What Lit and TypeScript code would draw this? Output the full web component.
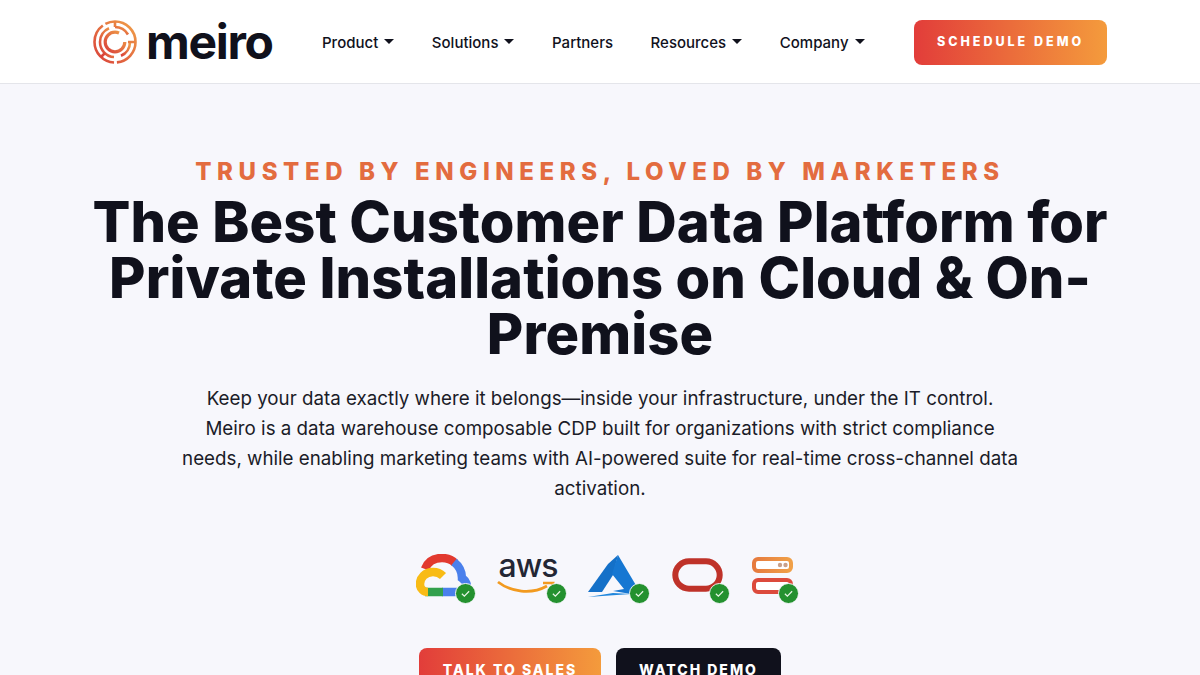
import { LitElement, html, css, svg } from 'lit';
import { customElement } from 'lit/decorators.js';

const NAV = [
  { label: 'Product', caret: true },
  { label: 'Solutions', caret: true },
  { label: 'Partners', caret: false },
  { label: 'Resources', caret: true },
  { label: 'Company', caret: true },
];

const check = html`
  <svg class="check" viewBox="0 0 22 22">
    <circle cx="11" cy="11" r="10.5" fill="#24912f" stroke="#f7f7fc" stroke-width="1" />
    <path d="M7.2 11.2l2.6 2.5 5-5" fill="none" stroke="#e8f5e6" stroke-width="1.3" />
  </svg>
`;

const logo = svg`
  <svg class="logo-mark" width="44" height="44" viewBox="0 0 44 44">
    <defs>
      <linearGradient id="lg" x1="0" y1="1" x2="1" y2="0">
        <stop offset="0" stop-color="#d9403a" />
        <stop offset="1" stop-color="#f0a048" />
      </linearGradient>
    </defs>
    <g fill="none" stroke="url(#lg)" stroke-width="2.6">
      <circle cx="22" cy="22" r="20.5" stroke-dasharray="30 3 50 3 42 3" />
      <path d="M22 7a15 15 0 0 1 13 7.500" />
      <path d="M37 22a15 15 0 0 1-9 13.800" />
      <path d="M21 37a15 15 0 0 1-14-15 15 15 0 0 1 9-13.800" />
      <circle cx="22" cy="22" r="9.800" stroke-width="3.200" stroke-dasharray="50 12" />
      <path d="M22 1.500v5.500M35 22h7M12 33l-4 4" />
    </g>
  </svg>
`;

const googleCloud = html`
  <svg width="55" height="46" viewBox="0 0 55 46" fill="none" stroke-width="8.500">
    <path d="M9 15C12 7 19 4 26 4c5 0 10 2 13 5" stroke="#e2392f" />
    <path d="M38 8c5 4 8 10 8 16 4 3 6 7 4 11-1 2-3 3-6 3H26" stroke="#4a80ec" />
    <path d="M9 38h18" stroke="#32a04c" />
    <path d="M27 22c-3-3-7-4-10-4C9 18 4 24 4 30c0 5 4 8 8 8" stroke="#f8bb15" />
  </svg>
`;

const aws = html`
  <svg width="66" height="56" viewBox="0 -10 66 56">
    <text x="32" y="23" text-anchor="middle" class="aws">aws</text>
    <path d="M2 28c13 10 33 13 49 4" fill="none" stroke="#f29a1f" stroke-width="2.800" />
    <path d="M47 29h10l-1 3" fill="none" stroke="#f29a1f" stroke-width="2.500" />
  </svg>
`;

const azure = html`
  <svg width="58" height="46" viewBox="0 0 58 46">
    <path d="M1 38L21 10l10-9-5 20-11 17z" fill="#1470c8" />
    <path d="M31 1l19 32-6 7-18-3 11-2-12-15z" fill="#1677d2" />
    <path d="M1 43l25-4 18 1z" fill="#1f86dc" />
  </svg>
`;

const oracle = html`
  <svg width="55" height="46" viewBox="0 0 55 46">
    <rect x="5.300" y="7.300" width="44.400" height="27.400" rx="13.700" fill="none" stroke="#bf3229" stroke-width="6" />
  </svg>
`;

const server = html`
  <svg width="44" height="46" viewBox="0 0 44 46">
    <defs>
      <linearGradient id="sg" x1="0" y1="0" x2="1" y2="0">
        <stop offset="0" stop-color="#e67a3e" />
        <stop offset="1" stop-color="#f0a048" />
      </linearGradient>
    </defs>
    <rect x="4" y="5" width="37" height="12" rx="4" fill="#fff" stroke="url(#sg)" stroke-width="4" />
    <rect x="4" y="26" width="37" height="12" rx="4" fill="#fff" stroke="#dc4a3c" stroke-width="4" />
    <circle cx="30" cy="11" r="2.200" fill="#c9a08a" />
    <circle cx="35.500" cy="11" r="2.200" fill="#c9a08a" />
  </svg>
`;

@customElement('app-root')
export class AppRoot extends LitElement {
  static styles = css`
    :host {
      display: block;
      height: 675px;
      overflow: hidden;
      background: #f7f7fc;
      color: #10111c;
      font-family: Inter, 'Liberation Sans', sans-serif;
    }

    .header {
      display: flex;
      align-items: center;
      height: 83px;
      padding: 0 93px;
      background: #fff;
      border-bottom: 1px solid #e4e5ea;
    }

    .brand {
      display: flex;
      align-items: center;
      gap: 9px;
      width: 229px;
    }

    .logo-mark {
      display: block;
    }

    .wordmark {
      font-size: 48px;
      font-weight: 700;
      letter-spacing: -1.3px;
      line-height: 46px;
    }

    .nav {
      display: flex;
      align-items: center;
      gap: 37.600px;
      flex: 1;
      margin-top: 2px;
      font-size: 15px;
      font-weight: 550;
    }

    .nav-item {
      display: flex;
      align-items: center;
      gap: 6px;
    }

    .caret {
      width: 0;
      height: 0;
      border-left: 5px solid transparent;
      border-right: 5px solid transparent;
      border-top: 5px solid #10111c;
      margin-bottom: 2px;
    }

    .btn {
      display: flex;
      align-items: center;
      justify-content: center;
      box-sizing: border-box;
      border-radius: 8px;
      color: #fff;
      font-size: 14px;
      font-weight: 800;
      letter-spacing: 2px;
      background: linear-gradient(90deg, #e23d3a, #f49b3c);
    }

    .btn-header {
      width: 193px;
      height: 45px;
      margin-top: 2px;
      font-size: 12.500px;
      letter-spacing: 3px;
      padding-bottom: 3px;
    }

    .hero {
      display: flex;
      flex-direction: column;
      align-items: center;
      padding-top: 73px;
      text-align: center;
    }

    .eyebrow {
      font-size: 24px;
      font-weight: 800;
      letter-spacing: 5.600px;
      line-height: 30px;
      color: #e36c3f;
    }

    h1 {
      margin: 7px 0 0;
      width: 1040px;
      font-size: 56px;
      font-weight: 800;
      line-height: 56px;
      letter-spacing: 0.100px;
    }

    .lede {
      margin: 22px 0 0;
      width: 845px;
      font-size: 18.750px;
      line-height: 30px;
      color: #1b1c28;
    }

    .platforms {
      display: flex;
      align-items: flex-end;
      gap: 25px;
      margin-top: 50px;
      padding-left: 10px;
      height: 46px;
    }

    .platform {
      position: relative;
      display: flex;
    }

    .check {
      position: absolute;
      right: -5px;
      bottom: -4px;
      width: 21px;
      height: 21px;
    }

    .aws {
      font-size: 32px;
      font-weight: 500;
      letter-spacing: -1px;
      fill: #232634;
    }

    .actions {
      display: flex;
      gap: 15px;
      margin-top: 48px;
    }

    .btn-action {
      width: 182px;
      height: 46px;
      padding-bottom: 4px;
    }

    .btn-dark {
      width: 165px;
      background: #10111c;
    }
  `;

  render() {
    return html`
      <header class="header">
        <div class="brand">${logo}<span class="wordmark">meiro</span></div>
        <nav class="nav">
          ${NAV.map(
            (item) => html`
              <span class="nav-item">
                ${item.label}${item.caret ? html`<span class="caret"></span>` : ''}
              </span>
            `,
          )}
        </nav>
        <a class="btn btn-header">SCHEDULE DEMO</a>
      </header>
      <main class="hero">
        <div class="eyebrow">TRUSTED BY ENGINEERS, LOVED BY MARKETERS</div>
        <h1>The Best Customer Data Platform for Private Installations on Cloud &amp; On-Premise</h1>
        <p class="lede">
          Keep your data exactly where it belongs—inside your infrastructure, under the IT control.<br />
          Meiro is a data warehouse composable CDP built for organizations with strict compliance
          needs, while enabling marketing teams with AI-powered suite for real-time cross-channel data
          activation.
        </p>
        <div class="platforms">
          ${[googleCloud, aws, azure, oracle, server].map(
            (icon) => html`<div class="platform">${icon}${check}</div>`,
          )}
        </div>
        <div class="actions">
          <a class="btn btn-action">TALK TO SALES</a>
          <a class="btn btn-action btn-dark">WATCH DEMO</a>
        </div>
      </main>
    `;
  }
}
